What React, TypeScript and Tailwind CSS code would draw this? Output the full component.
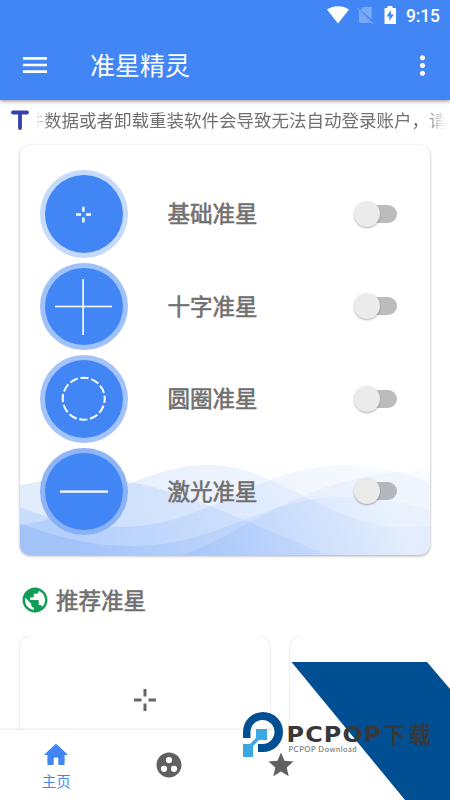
import { MdGroupWork, MdMenu, MdMoreVert, MdPublic, MdStar } from 'react-icons/md'

const sights = [
  { name: '基础准星', ring: 'bg-[#c6dafc]', kind: 'basic' },
  { name: '十字准星', ring: 'bg-[#a0c2fb]', kind: 'cross' },
  { name: '圆圈准星', ring: 'bg-[#a3c3fa]', kind: 'circle' },
  { name: '激光准星', ring: 'bg-[#83adf5]/90', kind: 'laser' },
]

function SightIcon({ kind }: { kind: string }) {
  return (
    <svg className="size-[77px]" viewBox="0 0 77 77" fill="none" stroke="#fff">
      {kind === 'basic' && <path d="M31 39.5h5M41 39.5h5M38.4 31.8v5M38.4 42.5v5" strokeWidth="2.4" />}
      {kind === 'cross' && <path d="M10 38.5h57M38.1 11v56" strokeWidth="1.6" />}
      {kind === 'circle' && <circle cx="38.7" cy="38.7" r="21" strokeWidth="2" strokeDasharray="8.3 2.7" strokeDashoffset="4" />}
      {kind === 'laser' && <path d="M15 38.6h48" strokeWidth="2.4" />}
    </svg>
  )
}

function Switch() {
  return (
    <div className="flex h-[18px] w-[43px] items-center justify-start rounded-full bg-gradient-to-r from-transparent from-30% to-[#797979]/50 to-30%">
      <div className="size-[26px] shrink-0 rounded-full bg-[#ebebeb] shadow-[0_1px_2px_rgba(0,0,0,0.3)]"></div>
    </div>
  )
}

function Waves() {
  return (
    <svg className="absolute bottom-0 left-0 h-[95px] w-[410px]" viewBox="0 460 410 95">
      <defs>
        <linearGradient id="wave" x1="60" y1="560" x2="350" y2="450" gradientUnits="userSpaceOnUse">
          <stop offset="0" stopColor="#4285f4" stopOpacity="0.155" />
          <stop offset="1" stopColor="#4285f4" stopOpacity="0.04" />
        </linearGradient>
      </defs>
      <g fill="url(#wave)">
        <path d="M0 485C40 477 80 475 115 483C175 495 245 530 308 555H0Z" />
        <path d="M0 525C60 520 115 465 188 465C260 465 310 530 390 527L410 526V555H0Z" />
        <path d="M0 507C30 520 65 527 100 527C190 527 235 465 327 465C360 465 390 474 410 484V555H0Z" />
        <path d="M0 523C40 539 75 546 113 546C200 546 240 497 323 497C356 497 385 502 410 510V555H0Z" />
        <path d="M163 555C235 528 290 470 410 471V555Z" />
      </g>
    </svg>
  )
}

function StatusBar() {
  return (
    <div className="flex h-[30px] items-center justify-end pr-[8px] text-white">
      <svg className="h-[18px] w-[115px]" viewBox="0 0 115 18">
        <path d="M0 3.500C6-1 16-1 22 3.500L11 17.500Z" fill="#fff" />
        <path d="M36.500 1H44.700V13.500L33.500 3.500Z M32 4.500L44 17H34Q32 17 32 15Z" fill="#fff" opacity=".3" />
        <path d="M30.500 2L46 17.700" stroke="#fff" strokeOpacity=".4" />
        <path fillRule="evenodd" d="M60.500 0h5v2h3.500v16H57.500V2h3ZM64 4L59.500 10.500h3L62 15L67 8.500h-3Z" fill="#fff" />
        <text x="79" y="15.800" fill="#fff" fontFamily="Roboto" fontSize="17.500" fontWeight="500" textLength="34">9:15</text>
      </svg>
    </div>
  )
}

function Watermark() {
  return (
    <svg className="pointer-events-none absolute top-[660px] left-[240px] h-[140px] w-[210px]" viewBox="240 660 210 140">
      <path d="M291.500 662H427L450 689V800H405Z" fill="#004f92" />
      <path d="M243 738V732A20 20 0 0 1 283 732A20 20 0 0 1 263 752H258V744H263A12 12 0 1 0 250.500 732V738Z" fill="#004f92" />
      <path d="M256 729H267V740H259L253 746V757H243V744H250L256 738Z" fill="#3ba8e4" />
      <g fill="#38383a" fontWeight="700">
        <text x="286.500" y="742" fontSize="20.500" fontFamily='"DejaVu Sans", sans-serif' letterSpacing="1" textLength="96" lengthAdjust="spacingAndGlyphs">PCPOP</text>
        <text x="383" y="743" fontSize="22.500" fontFamily='"Noto Sans CJK SC", sans-serif' textLength="48">下载</text>
      </g>
      <text x="288.500" y="751.700" fill="#666" fontFamily="Lato" fontSize="7.600" textLength="68">PCPOP Download</text>
    </svg>
  )
}

export default function App() {
  return (
    <div className="relative flex h-[800px] w-[450px] flex-col overflow-hidden bg-white font-['Roboto','Noto_Sans_CJK_SC',sans-serif] text-[#707070]">
      <header className="z-10 h-[100px] shrink-0 bg-[#4285f4] text-white shadow-[0_1px_4px_rgba(0,0,0,0.45)]">
        <StatusBar />
        <div className="flex h-[70px] items-center pr-[12px] pl-[19px]">
          <MdMenu className="size-8" />
          <h1 className="ml-[39px] flex-1 pt-[4px] text-[25px]">准星精灵</h1>
          <MdMoreVert className="size-[31px]" />
        </div>
      </header>

      <div className="flex h-[40px] shrink-0 items-center">
        <svg className="mb-[1px] ml-[11px] h-[20px] w-[18px]" viewBox="0 0 18 20">
          <path d="M2 2.500h14M9 2.500v15.500" stroke="#3142ae" strokeWidth="3.800" strokeLinecap="round" />
        </svg>
        <div className="ml-[7px] flex w-[409px] overflow-hidden [mask-image:linear-gradient(to_right,transparent,#000_14px,#000_390px,transparent)]">
          <p className="-ml-[9.500px] pt-[2px] text-[17.500px] whitespace-nowrap">件数据或者卸载重装软件会导致无法自动登录账户，请</p>
        </div>
      </div>

      <section className="relative mx-5 mt-[5px] h-[410px] shrink-0 overflow-hidden rounded-[10px] shadow-[0_1px_3px_rgba(0,0,0,0.35)]">
        <Waves />
        <div className="relative flex flex-col gap-[5px] pt-[25px]">
          {sights.map((sight) => (
            <div key={sight.name} className="flex h-[87.500px] items-center pr-[33px] pl-[20px]">
              <div className={'flex size-[87.500px] items-center justify-center rounded-full ' + sight.ring}>
                <div className="flex size-[77.500px] items-center justify-center rounded-full bg-[#4285f4]">
                  <SightIcon kind={sight.kind} />
                </div>
              </div>
              <h2 className="ml-[40px] flex-1 pt-[3px] text-[22.500px] [-webkit-text-stroke:0.6px]">{sight.name}</h2>
              <Switch />
            </div>
          ))}
        </div>
      </section>

      <div className="mt-[25px] flex h-10 shrink-0 items-center gap-[6px] pl-5">
        <MdPublic className="size-[30px] text-[#0f9d58]" />
        <h2 className="pt-[3px] text-[22.500px] [-webkit-text-stroke:0.6px]">推荐准星</h2>
      </div>

      <div className="mt-4 flex w-[440px] flex-1 gap-5 overflow-hidden pl-5">
        <div className="flex w-[250px] shrink-0 justify-center rounded-t-[12px] pt-[53px] shadow-[0_0_2px_rgba(0,0,0,0.2)]">
          <svg className="size-[22px]" viewBox="0 0 22 22" stroke="#666" strokeWidth="3">
            <path d="M0 11h7.500M14.500 11h7.500M11 0v7.500M11 14.500v7.500" />
          </svg>
        </div>
        <div className="w-[250px] shrink-0 rounded-tl-[12px] shadow-[0_0_2px_rgba(0,0,0,0.2)]"></div>
      </div>

      <nav className="z-10 grid h-[70px] shrink-0 grid-cols-4 bg-white text-[#616161] shadow-[0_-1px_2px_rgba(0,0,0,0.1)]">
        <div className="flex flex-col items-center pt-[13px] text-[#4285f4]">
          <svg className="h-[23px] w-[24px]" viewBox="0 0 24 23" fill="currentColor">
            <path d="M9.700 21V15.200Q9.700 14.500 10.400 14.500H13.600Q14.300 14.500 14.300 15.200V21Q14.300 22 15.300 22H19.500Q20.600 22 20.600 20.900V12H22.700Q24 12 23.100 11L12.700 1.300Q12 .700 11.300 1.300L.900 11Q0 12 1.300 12H3.400V20.900Q3.400 22 4.500 22H8.700Q9.700 22 9.700 21Z" />
          </svg>
          <span className="mt-[5px] text-[14.500px] leading-6">主页</span>
        </div>
        <div className="flex items-center justify-center"><MdGroupWork className="size-[30px]" /></div>
        <div className="flex items-center justify-center"><MdStar className="size-[30px]" /></div>
        <div></div>
      </nav>
      <div className="absolute inset-0 z-20"><Watermark /></div>
    </div>
  )
}
